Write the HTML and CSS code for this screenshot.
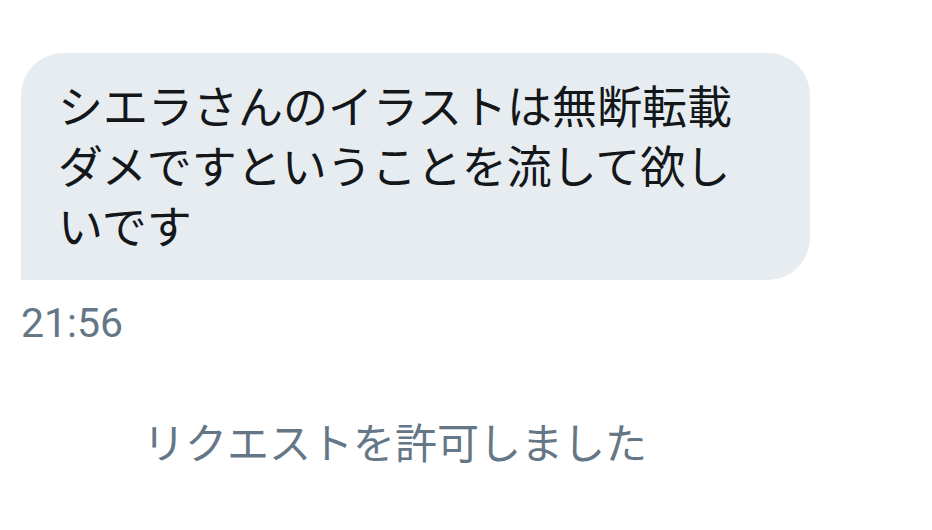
FILE: index.html
```html
<!DOCTYPE html>
<html lang="ja">
<head>
<meta charset="utf-8">
<link rel="stylesheet" href="styles.css">
</head>
<body>
<div class="thread">
  <div class="message">
    <div class="bubble">シエラさんのイラストは無断転載ダメですということを流して欲しいです</div>
    <div class="time">21:56</div>
  </div>
  <div class="notice">リクエストを許可しました</div>
</div>
</body>
</html>
```
FILE: styles.css
```css
html, body {
  margin: 0;
  padding: 0;
  background: #ffffff;
}
body {
  width: 932px;
  height: 530px;
  overflow: hidden;
  font-family: Roboto, "Noto Sans CJK JP", sans-serif;
}
.thread {
  display: flex;
  flex-direction: column;
  padding: 53px 0 0 21px;
}
.message {
  display: flex;
  flex-direction: column;
  align-items: flex-start;
}
.bubble {
  box-sizing: border-box;
  width: 789px;
  padding: 22px 62px 25px 37px;
  background: #e6ecf0;
  color: #14171a;
  font-family: "Noto Sans CJK JP", sans-serif;
  font-size: 45px;
  line-height: 60px;
  border-radius: 42px 42px 42px 0;
}
.time {
  margin-top: 19px;
  font-family: Roboto, sans-serif;
  font-size: 41px;
  line-height: 48px;
  color: #657786;
}
.notice {
  margin-top: 69px;
  padding-left: 122px;
  font-family: "Noto Sans CJK JP", sans-serif;
  font-size: 42px;
  line-height: 50px;
  color: #657786;
}
```
